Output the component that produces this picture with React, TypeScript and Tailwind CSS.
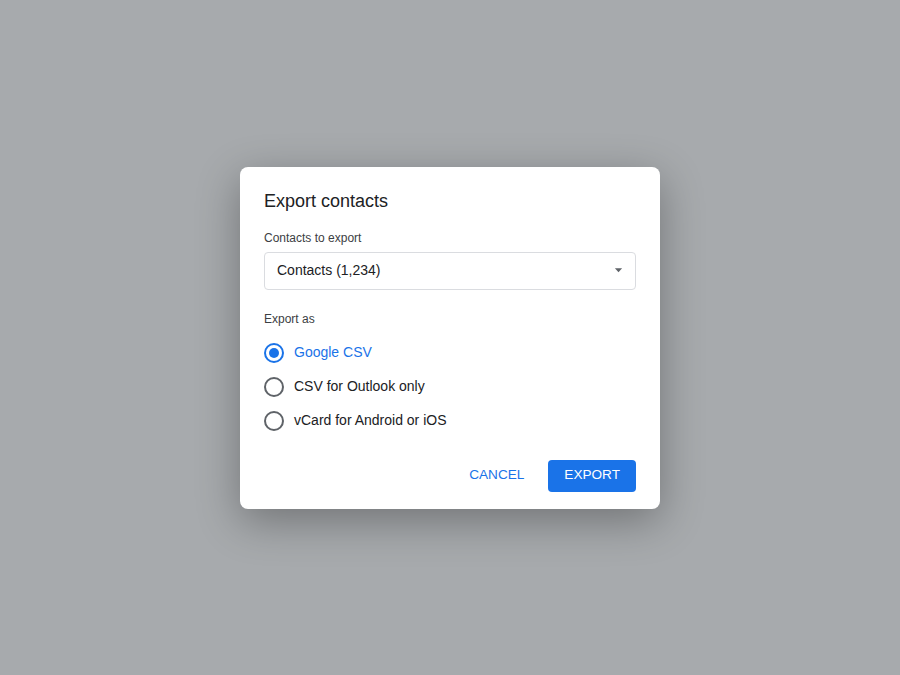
import { useState } from 'react';

const options = ['Google CSV', 'CSV for Outlook only', 'vCard for Android or iOS'];

function Radio({ checked }: { checked: boolean }) {
  return (
    <span
      className={
        checked
          ? 'flex h-5 w-5 items-center justify-center rounded-full border-2 border-[#1a73e8]'
          : 'flex h-5 w-5 items-center justify-center rounded-full border-2 border-[#5f6368]'
      }
    >
      {checked && <span className="h-2.5 w-2.5 rounded-full bg-[#1a73e8]" />}
    </span>
  );
}

export default function App() {
  const [selected, setSelected] = useState(0);

  return (
    <div className="flex h-[675px] w-full items-center justify-center bg-[#a7aaad] font-['Liberation_Sans',Arial,sans-serif]">
      <div className="w-[420px] rounded-lg bg-white px-6 pt-[22px] pb-[17px] shadow-[0_12px_44px_rgba(0,0,0,0.32)]">
        <h2 className="text-[18px] leading-6 text-[#202124]">Export contacts</h2>

        <div className="mt-[17px] text-[12px] leading-4 text-[#3c4043]">Contacts to export</div>
        <button className="mt-1.5 flex h-[38px] w-full items-center justify-between rounded border border-[#dadce0] pl-3 pr-[12px] text-[14px] text-[#202124]">
          <span>Contacts (1,234)</span>
          <svg width="9" height="5" viewBox="0 0 10 5">
            <path d="M1 0h8L5 4.5z" fill="#5f6368" />
          </svg>
        </button>

        <div className="mt-[21px] text-[12px] leading-4 text-[#3c4043]">Export as</div>
        <div className="mt-[9px] flex flex-col">
          {options.map((label, i) => (
            <label
              key={label}
              onClick={() => setSelected(i)}
              className="flex h-[34px] cursor-pointer items-center gap-[10px]"
            >
              <Radio checked={selected === i} />
              <span
                className={
                  selected === i
                    ? 'text-[14px] text-[#1a73e8]'
                    : 'text-[14px] text-[#202124]'
                }
              >
                {label}
              </span>
            </label>
          ))}
        </div>

        <div className="mt-[22px] flex justify-end gap-2">
          <button className="h-8 rounded px-4 text-[13.6px] font-medium text-[#1a73e8]">
            CANCEL
          </button>
          <button className="h-8 rounded bg-[#1a73e8] px-4 text-[13.6px] font-medium text-white">
            EXPORT
          </button>
        </div>
      </div>
    </div>
  );
}
